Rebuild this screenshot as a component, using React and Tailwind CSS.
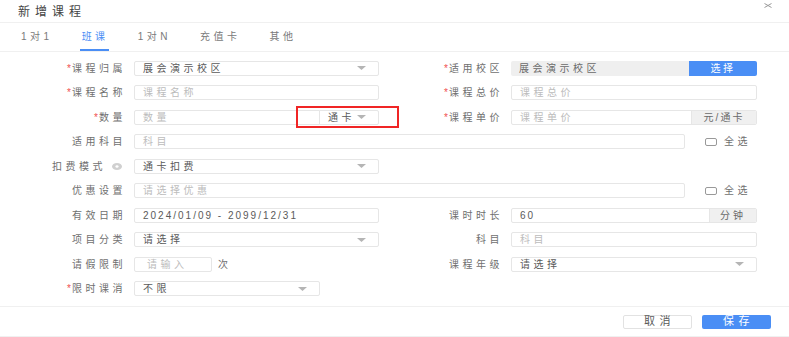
import React from "react";

const cjk = { fontFamily: '"Liberation Sans", "Noto Sans CJK SC", sans-serif' };

const Caret = () => (
  <svg width="9" height="4" viewBox="0 0 9 4" className="shrink-0">
    <path d="M0 0 L9 0 L4.5 4 Z" fill="#b5b5b5" />
  </svg>
);

const Label = ({ text, required, width = "w-[126px]" }) => (
  <div className={`${width} shrink-0 flex justify-end items-center text-[10px] tracking-[3.5px] text-[#6f6f6f]`}>
    {required && <span className="text-[#f05050] mr-[1px] tracking-normal">*</span>}
    <span>{text}</span>
  </div>
);

const TextInput = ({ placeholder, value, className = "w-[245px]" }) => (
  <div
    className={`${className} h-[15px] border border-[#e6e6e6] rounded-[2px] bg-white flex items-center px-[8px] text-[10px] tracking-[3.5px] ${
      value ? "text-[#5a5a5a]" : "text-[#bcbcbc]"
    }`}
  >
    {value || placeholder}
  </div>
);

const Select = ({ value, className = "w-[245px]" }) => (
  <div
    className={`${className} h-[15px] border border-[#e6e6e6] rounded-[2px] bg-white flex items-center justify-between pl-[8px] pr-[12px] text-[10px] tracking-[3.5px] text-[#5a5a5a]`}
  >
    <span>{value}</span>
    <Caret />
  </div>
);

const Checkbox = () => (
  <div className="flex items-center ml-[20px] text-[10px] tracking-[3.5px] text-[#6f6f6f]">
    <div className="w-[12px] h-[8px] border border-[#999] rounded-[2px] mr-[7px]" />
    <span>全选</span>
  </div>
);

const Row = ({ children }) => <div className="h-[24.5px] flex items-center">{children}</div>;

const Left = ({ children }) => <div className="w-[389px] shrink-0 flex items-center">{children}</div>;

const Gap = () => <div className="w-[8px] shrink-0" />;

export default function App() {
  const tabs = ["1对1", "班课", "1对N", "充值卡", "其他"];
  return (
    <div className="w-[789px] h-[337px] bg-white overflow-hidden" style={cjk}>
      {/* header */}
      <div className="h-[23px] border-b border-[#f0f0f0] flex items-center justify-between pl-[18px] pr-[17px]">
        <span className="text-[12px] tracking-[5px] text-[#444] leading-none pt-[2px]">新增课程</span>
        <svg width="8" height="5" viewBox="0 0 8 5" className="self-start mt-[3px]">
          <path d="M0.5 0.5 L7.5 4.5 M7.5 0.5 L0.5 4.5" stroke="#999" strokeWidth="1" />
        </svg>
      </div>

      {/* tabs */}
      <div className="h-[29px] border-b border-[#f0f0f0] flex items-end pl-[19px] gap-[27px]">
        {tabs.map((t) => (
          <div
            key={t}
            className={`h-[28px] flex items-center pl-[2px] text-[10px] tracking-[3.5px] ${
              t === "班课" ? "text-[#4a8ef5] border-b-2 border-[#4a8ef5]" : "text-[#7a7a7a] border-b-2 border-transparent"
            }`}
          >
            {t}
          </div>
        ))}
      </div>

      {/* form */}
      <div className="pt-[4px] pb-[5px]">
        <Row>
          <Left>
            <Label text="课程归属" required />
            <Gap />
            <Select value="展会演示校区" />
          </Left>
          <Label text="适用校区" required width="w-[114px]" />
          <Gap />
          <div className="w-[246px] h-[15px] flex rounded-[2px] overflow-hidden">
            <div className="flex-1 bg-[#efefef] flex items-center pl-[8px] text-[10px] tracking-[3.5px] text-[#6a6a6a]">
              展会演示校区
            </div>
            <div className="w-[68px] bg-[#4a8ef5] text-white flex items-center justify-center text-[10px] tracking-[2.5px]">
              选择
            </div>
          </div>
        </Row>

        <Row>
          <Left>
            <Label text="课程名称" required />
            <Gap />
            <TextInput placeholder="课程名称" />
          </Left>
          <Label text="课程总价" required width="w-[114px]" />
          <Gap />
          <TextInput placeholder="课程总价" className="w-[246px]" />
        </Row>

        <Row>
          <Left>
            <Label text="数量" required />
            <Gap />
            <div className="relative flex items-center">
              <TextInput placeholder="数量" className="w-[186px] rounded-r-none" />
              <Select value="通卡" className="w-[60px] -ml-[1px] rounded-l-none" />
              <div className="absolute left-[162px] top-[-3.5px] w-[103px] h-[22px] border-2 border-[#f02525]" />
            </div>
          </Left>
          <Label text="课程单价" required width="w-[114px]" />
          <Gap />
          <div className="w-[246px] h-[15px] flex border border-[#e6e6e6] rounded-[2px] overflow-hidden">
            <div className="flex-1 flex items-center pl-[8px] text-[10px] tracking-[3.5px] text-[#bcbcbc]">
              课程单价
            </div>
            <div className="w-[65px] bg-[#f0f0f0] border-l border-[#e6e6e6] flex items-center justify-center text-[10px] tracking-[2px] text-[#6a6a6a]">
              元/通卡
            </div>
          </div>
        </Row>

        <Row>
          <Label text="适用科目" />
          <Gap />
          <TextInput placeholder="科目" className="w-[551px]" />
          <Checkbox />
        </Row>

        <Row>
          <Left>
            <div className="w-[126px] shrink-0 flex justify-end items-center text-[10px] tracking-[3.5px] text-[#6f6f6f]">
              <span>扣费模式</span>
              <svg width="10" height="7" viewBox="0 0 10 7" className="ml-[6px] mr-[4px]">
                <ellipse cx="5" cy="3.5" rx="5" ry="3.5" fill="#d0d0d0" />
                <ellipse cx="5" cy="3.5" rx="1.6" ry="1.3" fill="#fff" />
              </svg>
            </div>
            <Gap />
            <Select value="通卡扣费" />
          </Left>
        </Row>

        <Row>
          <Label text="优惠设置" />
          <Gap />
          <TextInput placeholder="请选择优惠" className="w-[551px]" />
          <Checkbox />
        </Row>

        <Row>
          <Left>
            <Label text="有效日期" />
            <Gap />
            <div className="w-[245px] h-[15px] border border-[#e6e6e6] rounded-[2px] flex items-center px-[8px] text-[10px] tracking-[2px] text-[#5a5a5a]">
              2024/01/09 - 2099/12/31
            </div>
          </Left>
          <Label text="课时时长" width="w-[114px]" />
          <Gap />
          <div className="w-[246px] h-[15px] flex border border-[#e6e6e6] rounded-[2px] overflow-hidden">
            <div className="flex-1 flex items-center pl-[8px] text-[10px] tracking-[2px] text-[#5a5a5a]">60</div>
            <div className="w-[47px] bg-[#f0f0f0] border-l border-[#e6e6e6] flex items-center justify-center text-[10px] tracking-[3px] text-[#6a6a6a]">
              分钟
            </div>
          </div>
        </Row>

        <Row>
          <Left>
            <Label text="项目分类" />
            <Gap />
            <Select value="请选择" />
          </Left>
          <Label text="科目" width="w-[114px]" />
          <Gap />
          <TextInput placeholder="科目" className="w-[246px]" />
        </Row>

        <Row>
          <Left>
            <Label text="请假限制" />
            <Gap />
            <TextInput placeholder="请输入" className="w-[78px] pl-[12px]" />
            <span className="ml-[6px] text-[10px] text-[#6f6f6f]">次</span>
          </Left>
          <Label text="课程年级" width="w-[114px]" />
          <Gap />
          <Select value="请选择" className="w-[246px]" />
        </Row>

        <Row>
          <Left>
            <Label text="限时课消" required />
            <Gap />
            <Select value="不限" className="w-[186px]" />
          </Left>
        </Row>
      </div>

      {/* footer */}
      <div className="h-[31px] border-t border-b border-[#f0f0f0] flex items-center justify-end gap-[10px] pr-[18px]">
        <button className="w-[69px] h-[14px] border border-[#e2e2e2] rounded-[2px] bg-white text-[11px] tracking-[4.5px] pl-[4px] text-[#5a5a5a] flex items-center justify-center">
          取消
        </button>
        <button className="w-[69px] h-[14px] rounded-[2px] bg-[#4a8ef5] text-[11px] tracking-[4.5px] pl-[4px] text-white flex items-center justify-center">
          保存
        </button>
      </div>
    </div>
  );
}
